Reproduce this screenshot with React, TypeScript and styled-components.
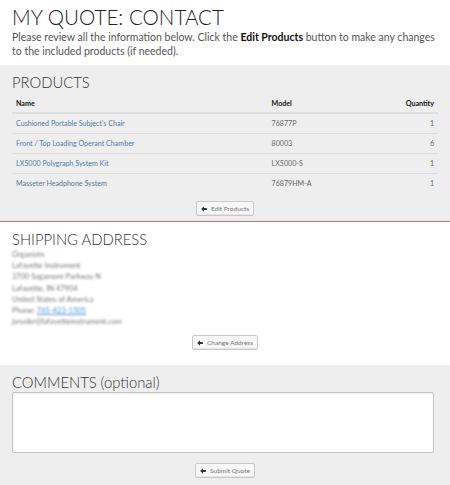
import React from "react";
import styled, { createGlobalStyle } from "styled-components";

const Global = createGlobalStyle`
  html, body { margin: 0; padding: 0; background: #fff; }
  body { font-family: Lato, "Open Sans", sans-serif; color: #333; }
`;

const Page = styled.div`
  width: 450px;
`;

const Header = styled.header`
  padding: 4px 12px 7px;
`;

const Title = styled.h1`
  margin: 0;
  font-size: 20.6px;
  line-height: 26px;
  font-weight: 300;
  color: #222;
`;

const Intro = styled.p`
  margin: 0;
  font-size: 10.5px;
  line-height: 14px;
  color: #555;
  b { color: #111; font-weight: 700; }
`;

const Section = styled.section<{ $tone: "gray" | "white"; $divider?: boolean; $bottom?: number }>`
  background: ${(p) => (p.$tone === "gray" ? "#eeeeee" : "#ffffff")};
  padding: 7px 12px ${(p) => p.$bottom ?? 6}px;
  border-bottom: ${(p) => (p.$divider ? "1px solid #dc6f6a" : "0")};
`;

const Heading = styled.h2`
  margin: 0;
  font-size: 14.8px;
  line-height: 20px;
  font-weight: 300;
  color: #333;
`;

const Table = styled.table`
  width: 100%;
  border-collapse: collapse;
  font-size: 7.1px;
  margin-top: 3px;
`;

const Th = styled.th<{ $align?: "left" | "right"; $w?: string }>`
  text-align: ${(p) => p.$align ?? "left"};
  font-weight: 700;
  color: #111;
  padding: 0 4px;
  height: 18px;
  box-sizing: border-box;
  border-bottom: 2px solid #dedede;
  width: ${(p) => p.$w ?? "auto"};
`;

const Td = styled.td<{ $align?: "left" | "right"; $link?: boolean }>`
  text-align: ${(p) => p.$align ?? "left"};
  color: ${(p) => (p.$link ? "#4f7aa8" : "#666666")};
  padding: 0 4px;
  height: 19px;
  line-height: 19px;
  border-top: 1px solid #dedede;
`;

const ButtonRow = styled.div<{ $top?: number }>`
  display: flex;
  justify-content: center;
  padding-top: ${(p) => p.$top ?? 8}px;
`;

const Button = styled.button`
  display: inline-flex;
  align-items: center;
  gap: 4px;
  height: 15px;
  padding: 0 4px;
  font-family: Lato, sans-serif;
  font-size: 6.5px;
  color: #777;
  background: #f7f7f7;
  border: 1px solid #c8c8c8;
  border-radius: 2px;
  box-shadow: inset 0 -1px 0 #e6e6e6;
`;

const Address = styled.address`
  font-style: normal;
  font-size: 7.5px;
  line-height: 11.2px;
  color: #7a7a7a;
  filter: blur(1.3px);
  a { color: #4f8ed8; text-decoration: underline; }
`;

const TextArea = styled.textarea`
  display: block;
  box-sizing: border-box;
  width: 422px;
  height: 61px;
  margin: 0;
  background: #fff;
  border: 1px solid #c4c4c4;
  border-radius: 2px;
  box-shadow: inset 0 1px 2px rgba(0,0,0,0.08);
  resize: none;
`;

const Arrow = () => (
  <svg width="6" height="6" viewBox="0 0 10 10" aria-hidden>
    <path d="M0.3 5 L5 0.6 L5 3.2 L9.7 3.2 L9.7 6.8 L5 6.8 L5 9.4 Z" fill="#333" />
  </svg>
);

const products = [
  { name: "Cushioned Portable Subject's Chair", model: "76877P", qty: 1 },
  { name: "Front / Top Loading Operant Chamber", model: "80003", qty: 6 },
  { name: "LX5000 Polygraph System Kit", model: "LX5000-S", qty: 1 },
  { name: "Masseter Headphone System", model: "76879HM-A", qty: 1 },
];

export default function App() {
  return (
    <Page>
      <Global />
      <Header>
        <Title>MY QUOTE: CONTACT</Title>
        <Intro>
          Please review all the information below. Click the <b>Edit Products</b> button to make any changes to the included products (if needed).
        </Intro>
      </Header>

      <Section $tone="gray" $divider $bottom={5}>
        <Heading>PRODUCTS</Heading>
        <Table>
          <thead>
            <tr>
              <Th $w="60%">Name</Th>
              <Th>Model</Th>
              <Th $align="right">Quantity</Th>
            </tr>
          </thead>
          <tbody>
            {products.map((p) => (
              <tr key={p.model}>
                <Td $link>{p.name}</Td>
                <Td>{p.model}</Td>
                <Td $align="right">{p.qty}</Td>
              </tr>
            ))}
          </tbody>
        </Table>
        <ButtonRow>
          <Button><Arrow />Edit Products</Button>
        </ButtonRow>
      </Section>

      <Section $tone="white" $bottom={15}>
        <Heading>SHIPPING ADDRESS</Heading>
        <Address>
          Organiztn<br />
          Lafayette Instrument<br />
          3700 Sagamore Parkway N<br />
          Lafayette, IN 47904<br />
          United States of America<br />
          Phone: <a>765-423-1505</a><br />
          jsnyder@lafayetteinstrument.com
        </Address>
        <ButtonRow $top={8}>
          <Button><Arrow />Change Address</Button>
        </ButtonRow>
      </Section>

      <Section $tone="gray" $bottom={9}>
        <Heading>COMMENTS (optional)</Heading>
        <TextArea />
        <ButtonRow $top={10}>
          <Button><Arrow />Submit Quote</Button>
        </ButtonRow>
      </Section>
    </Page>
  );
}
